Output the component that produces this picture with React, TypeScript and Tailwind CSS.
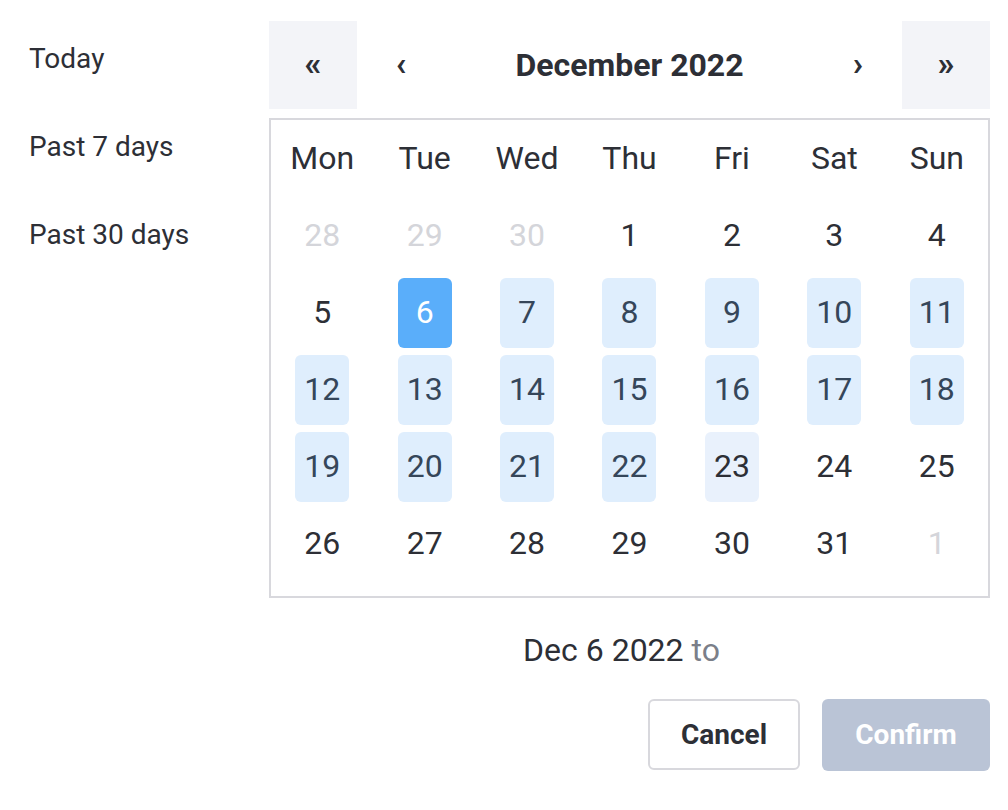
import React from "react";

type Day = { n: number; muted?: boolean; kind?: "selected" | "range" | "hover" };

const weekdays = ["Mon", "Tue", "Wed", "Thu", "Fri", "Sat", "Sun"];

const days: Day[] = [
  { n: 28, muted: true },
  { n: 29, muted: true },
  { n: 30, muted: true },
  { n: 1 },
  { n: 2 },
  { n: 3 },
  { n: 4 },
  { n: 5 },
  { n: 6, kind: "selected" },
  ...[7, 8, 9, 10, 11, 12, 13, 14, 15, 16, 17, 18, 19, 20, 21, 22].map(
    (n) => ({ n, kind: "range" as const })
  ),
  { n: 23, kind: "hover" },
  { n: 24 },
  { n: 25 },
  { n: 26 },
  { n: 27 },
  { n: 28 },
  { n: 29 },
  { n: 30 },
  { n: 31 },
  { n: 1, muted: true },
];

function DayCell({ day }: { day: Day }) {
  let box = "text-[#2d2f36]";
  if (day.muted) box = "text-[#d4d5da]";
  if (day.kind === "selected") box = "bg-[#5aaefa] text-white";
  if (day.kind === "range") box = "bg-[#dfeefd] text-[#35465a]";
  if (day.kind === "hover") box = "bg-[#e9f1fc] text-[#2d2f36]";
  return (
    <div className="flex h-[77px] items-center justify-center">
      <div
        className={`flex h-[70px] w-[54px] items-center justify-center rounded-[6px] pb-[1px] ${box}`}
      >
        {day.n}
      </div>
    </div>
  );
}

export default function App() {
  return (
    <div
      className="flex h-[810px] w-[1008px] bg-white text-[#2d2f36]"
      style={{ fontFamily: "Roboto, 'Liberation Sans', sans-serif" }}
    >
      {/* Presets */}
      <div className="flex w-[269px] flex-col pl-[29px] pt-[15px] text-[28px]">
        <div className="flex h-[88px] items-center">Today</div>
        <div className="flex h-[88px] items-center">Past 7 days</div>
        <div className="flex h-[88px] items-center">Past 30 days</div>
      </div>

      <div className="flex w-[721px] flex-col">
        {/* Header */}
        <div className="mt-[21px] flex h-[88px] items-center text-[32px]">
          <button className="flex h-[88px] w-[88px] items-center justify-center bg-[#f3f4f8] pb-[3px] text-[34px] font-bold">
            «
          </button>
          <button className="flex h-[88px] w-[88px] items-center justify-center pb-[3px] text-[34px] font-bold">
            ‹
          </button>
          <div className="flex-1 text-center font-bold">December 2022</div>
          <button className="flex h-[88px] w-[88px] items-center justify-center pb-[3px] text-[34px] font-bold">
            ›
          </button>
          <button className="flex h-[88px] w-[88px] items-center justify-center bg-[#f3f4f8] pb-[3px] text-[34px] font-bold">
            »
          </button>
        </div>

        {/* Calendar */}
        <div className="mt-[9px] border-2 border-[#d8d8dd] pb-[14px] text-[32px]">
          <div className="grid grid-cols-7">
            {weekdays.map((w) => (
              <div key={w} className="flex h-[77px] items-center justify-center pb-[1px]">
                {w}
              </div>
            ))}
            {days.map((d, i) => (
              <DayCell key={i} day={d} />
            ))}
          </div>
        </div>

        {/* Footer */}
        <div className="mt-[34px] pr-[16px] text-center text-[32px] leading-[36px]">
          Dec 6 2022 <span className="text-[#7b7f89]">to</span>
        </div>
        <div className="mt-[31px] flex justify-end gap-[22px] text-[28px] font-bold">
          <button className="h-[71px] w-[152px] rounded-[6px] border-2 border-[#d8d8dd] bg-white text-[#2d2f36]">
            Cancel
          </button>
          <button className="h-[72px] w-[168px] rounded-[6px] bg-[#bac4d6] text-white">
            Confirm
          </button>
        </div>
      </div>
    </div>
  );
}
